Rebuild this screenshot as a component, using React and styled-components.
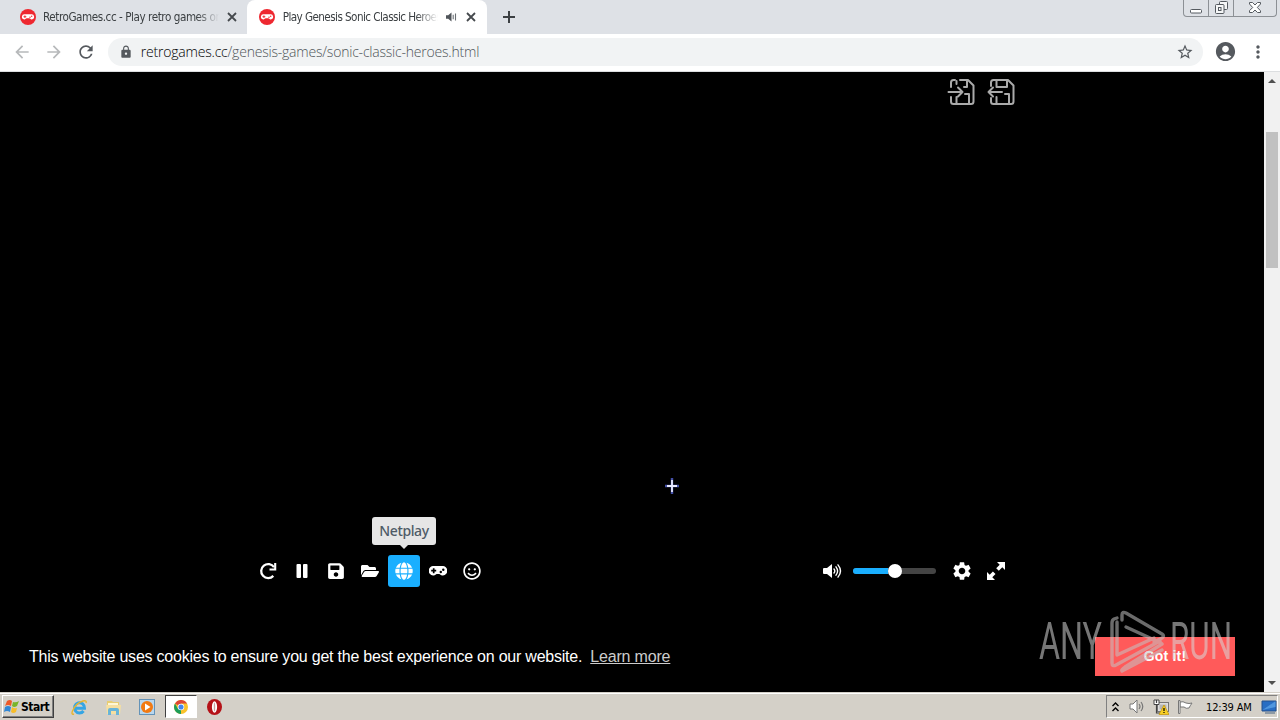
import React from 'react';
import styled, { createGlobalStyle } from 'styled-components';
import { FaSave, FaFolderOpen, FaGlobe, FaRegSmile } from 'react-icons/fa';
import { MdStarBorder, MdAccountCircle, MdMoreVert, MdLock, MdArrowBack, MdArrowForward, MdRefresh, MdSettings } from 'react-icons/md';

const App = () => {
  return (
    <>
      <GlobalStyle />
      <Screen>
        <TabStrip>
          <Tab $width={227}>
            <Favicon />
            <TabTitle $width={176} $spacing="-0.44px">RetroGames.cc - Play retro games on</TabTitle>
            <CloseIcon />
          </Tab>
          <Tab $active $width={240}>
            <Favicon />
            <TabTitle $width={155} $spacing="-0.56px">Play Genesis Sonic Classic Heroes</TabTitle>
            <SpeakerIcon />
            <CloseIcon />
          </Tab>
          <NewTab>
            <svg width="12" height="12" viewBox="0 0 12 12"><path d="M6 0v12M0 6h12" stroke="#3c4043" strokeWidth="2" /></svg>
          </NewTab>
          <WindowButtons>
            <WindowButton $width={25}>
              <svg width="12" height="5" viewBox="0 0 12 5"><rect x=".5" y=".5" width="11" height="3.5" rx="1" fill="#fff" stroke="#555a60" /></svg>
            </WindowButton>
            <WindowButton $width={25}>
              <svg width="13" height="13" viewBox="0 0 13 13" fill="#f5f6f7" stroke="#555a60">
                <rect x="4.5" y=".5" width="8" height="8" rx="1" />
                <rect x=".5" y="3.5" width="8.5" height="9" rx="1" />
                <rect x="3.5" y="6.5" width="2.5" height="3" />
              </svg>
            </WindowButton>
            <WindowButton $width={42}>
              <svg width="12" height="11" viewBox="0 0 12 11">
                <path d="M.5.5h3L6 3l2.500-2.500h3v1.500L8.300 5.500l3.200 3.200v1.800h-3L6 8l-2.500 2.500h-3V8.700l3.200-3.200L.5 2z" fill="#fff" stroke="#555a60" />
              </svg>
            </WindowButton>
          </WindowButtons>
        </TabStrip>

        <Toolbar>
          <NavButton $muted><MdArrowBack size={20} /></NavButton>
          <NavButton $muted><MdArrowForward size={20} /></NavButton>
          <NavButton><MdRefresh size={20} /></NavButton>
          <AddressBar>
            <MdLock size={14} />
            <Url><b>retrogames.cc</b>/genesis-games/sonic-classic-heroes.html</Url>
            <MdStarBorder size={18} />
          </AddressBar>
          <MdAccountCircle size={23} />
          <MdMoreVert size={20} />
        </Toolbar>

        <Content>
          <Game>
            <StateButtons>
              <LoadStateIcon />
              <SaveStateIcon />
            </StateButtons>
            <Cursor width="16" height="18" viewBox="0 0 16 18">
              <path d="M8 1v16M1 9h14" stroke="#4450a8" strokeWidth="2.400" />
              <path d="M8 3v12M3 9h10" stroke="#e9eaff" strokeWidth="1.800" />
            </Cursor>
            <Controls>
              <ControlButton><RestartIcon /></ControlButton>
              <ControlButton>
                <svg width="12" height="14" viewBox="0 0 12 14" fill="#fff"><rect x=".5" width="4.500" height="14" rx="1" /><rect x="7" width="4.500" height="14" rx="1" /></svg>
              </ControlButton>
              <ControlButton><FaSave size={18} /></ControlButton>
              <ControlButton><FaFolderOpen size={18} /></ControlButton>
              <ControlButton $active>
                <FaGlobe size={18} />
                <Tooltip>Netplay</Tooltip>
              </ControlButton>
              <ControlButton><GamepadIcon /></ControlButton>
              <ControlButton><FaRegSmile size={18} /></ControlButton>
              <Spacer />
              <ControlButton><VolumeIcon /></ControlButton>
              <Slider><SliderFill /><SliderThumb /></Slider>
              <ControlButton><MdSettings size={22} /></ControlButton>
              <ControlButton><ExpandIcon /></ControlButton>
            </Controls>
            <CookieBar>
              <CookieText>This website uses cookies to ensure you get the best experience on our website.</CookieText>
              <LearnMore>Learn more</LearnMore>
              <GotIt>Got it!</GotIt>
            </CookieBar>
            <Watermark />
          </Game>
          <Scrollbar>
            <Arrow $up />
            <Thumb />
            <Arrow />
          </Scrollbar>
        </Content>

        <Taskbar>
          <StartButton><WindowsIcon /><span>Start</span></StartButton>
          <QuickLaunch>
            <TaskItem><ExplorerIcon /></TaskItem>
            <TaskItem><FolderIcon /></TaskItem>
            <TaskItem><PlayerIcon /></TaskItem>
            <TaskItem $active><ChromeIcon /></TaskItem>
            <TaskItem><OperaIcon /></TaskItem>
          </QuickLaunch>
          <Tray>
            <svg width="7" height="10" viewBox="0 0 7 10" fill="none" stroke="#000" strokeWidth="1.400"><path d="M.5 4l3-3 3 3M.5 9l3-3 3 3" /></svg>
            <TraySpeaker />
            <TrayNetwork />
            <TrayFlag />
            <Clock>12:39 AM</Clock>
            <TrayDesktop />
          </Tray>
        </Taskbar>
      </Screen>
    </>
  );
};

export default App;

const Favicon = () => (
  <svg width="16" height="16" viewBox="0 0 16 16">
    <circle cx="8" cy="8" r="8" fill="#ee2830" />
    <path d="M4.800 5.200h6.400a2.600 2.600 0 0 1 .6 5.200c-1.200.2-1.700-1.100-2.400-1.100H6.600c-.7 0-1.200 1.300-2.400 1.100a2.600 2.600 0 0 1 .6-5.200z" fill="#fff" />
    <path d="M3.500 7.700h2.800M4.900 6.400v2.600" stroke="#ee2830" strokeWidth=".9" />
    <circle cx="10" cy="8.300" r=".7" fill="#ee2830" />
    <circle cx="11.700" cy="7.200" r=".7" fill="#ee2830" />
  </svg>
);

const CloseIcon = () => (
  <svg width="10" height="10" viewBox="0 0 10 10"><path d="M1 1l8 8M9 1L1 9" stroke="#45494d" strokeWidth="1.800" /></svg>
);

const SpeakerIcon = () => (
  <svg width="11" height="10" viewBox="0 0 11 10">
    <path d="M0 3.300h2.200L5.500.5v9L2.200 6.700H0z" fill="#50555a" />
    <path d="M7.200 2.800v4.400M9.500 1.500v7" stroke="#6b7075" strokeWidth="1.100" />
  </svg>
);

const floppy = {
  width: 28, height: 28, viewBox: '0 0 28 28', fill: 'none', stroke: '#aaa',
  strokeWidth: 2, strokeLinecap: 'round', strokeLinejoin: 'round',
};

const LoadStateIcon = () => (
  <svg {...floppy}>
    <path d="M4 9V4.500Q4 2 6.500 2H8M13 2h8l5.500 5.500v16q0 2.500-2.500 2.500H6.500Q4 26 4 23.500V19" />
    <path d="M1.500 14h14M11 9.500l4.500 4.500-4.500 4.500M9.500 3v3M20 3v6h-3M9.500 25v-6M18 16h4v9" />
  </svg>
);

const SaveStateIcon = () => (
  <svg {...floppy}>
    <path d="M4 8V4.500Q4 2 6.500 2H21l5.500 5.500v16q0 2.500-2.500 2.500H6.500Q4 26 4 23.500V20" />
    <path d="M15 14H1.500M6 9.500L1.500 14 6 18.500M9.500 2v7H20V2M9.500 25v-6M18 16h4v9" />
  </svg>
);

const RestartIcon = () => (
  <svg width="18" height="18" viewBox="0 0 18 18" fill="none" stroke="#fff" strokeWidth="2.300">
    <path d="M14.300 13.900A7 7 0 1 1 15 5.200" />
    <path d="M16.200 1v6.500H10.500" strokeWidth="2.100" />
  </svg>
);

const GamepadIcon = () => (
  <svg width="18" height="10" viewBox="0 0 18 10">
    <path d="M5 0h8a4.700 4.700 0 0 1 1 9.500C11.800 10 11.300 8 10.200 8H7.800C6.700 8 6.200 10 4 9.500A4.700 4.700 0 0 1 5 0z" fill="#fff" />
    <path d="M2.200 4.700h5M4.700 2.200v5" stroke="#000" strokeWidth="1.700" />
    <circle cx="11.800" cy="6" r="1.200" /><circle cx="14.300" cy="3.700" r="1.200" />
  </svg>
);

const VolumeIcon = () => (
  <svg width="19" height="16" viewBox="0 0 19 16">
    <path d="M1 5h3l5-4v14l-5-4H1q-1 0-1-1V6q0-1 1-1z" fill="#fff" />
    <path d="M11 6q1.600 2 0 4M13 3.800q3.200 4.200 0 8.400M15 1.900q5 6.100 0 12.200" fill="none" stroke="#fff" strokeWidth="1.400" strokeLinecap="round" />
  </svg>
);

const ExpandIcon = () => (
  <svg width="18" height="18" viewBox="0 0 18 18" fill="#fff">
    <path d="M10 0h8v8l-2.700-2.700-3.500 3.500-2.600-2.600 3.500-3.500zM0 10l2.700 2.700 3.200-3.200 2.600 2.600-3.200 3.200L8 18H0z" />
  </svg>
);

const Watermark = () => (
  <Mark width="194" height="66" viewBox="0 0 194 66">
    <text x="0" y="50" textLength="63" lengthAdjust="spacingAndGlyphs">ANY</text>
    <text x="131" y="50" textLength="62" lengthAdjust="spacingAndGlyphs">RUN</text>
    <g fill="none" stroke="#c4c4c4" strokeWidth="3.400" strokeLinejoin="round" strokeLinecap="round">
      <path d="M78 9l-3 1q-2 1-2 4v40q0 4 4 2l44-24" />
      <path d="M78 13v33l37-17" />
      <path d="M83 11V6q0-4 4-2l36 21q3 2 0 4l-8 4M87 18l35 16" />
      <path d="M123 35L86 58q-4 3-3 4l40-21" />
    </g>
  </Mark>
);

const WindowsIcon = () => (
  <svg width="16" height="15" viewBox="0 0 16 15">
    <path d="M3 2Q6 0 8 2L7 7Q4 5 1 7z" fill="#ed5928" />
    <path d="M9 3q3 1 6-1l-2 5q-3 2-5 0z" fill="#79b52b" />
    <path d="M1 8q3-2 6 0l-1 5q-3-2-6 0z" fill="#3187d5" />
    <path d="M8 8q2 2 5 1l-1 4q-3 2-5 0z" fill="#f8bd29" />
  </svg>
);

const ExplorerIcon = () => (
  <svg width="17" height="17" viewBox="0 0 17 17" fill="none">
    <path d="M4 9.200h9.500A5 5.200 0 1 0 12.500 12" stroke="#35a5e4" strokeWidth="3" />
    <path d="M3 15Q0 16 1.500 12 5 4 12 2q4-1 3 2" stroke="#e7b52f" strokeWidth="1.400" />
  </svg>
);

const FolderIcon = () => (
  <svg width="17" height="17" viewBox="0 0 17 17">
    <path d="M2 2h5l1 1h6v10H2z" fill="#e8cd72" />
    <path d="M3 4h10v4H3z" fill="#fff7d5" />
    <path d="M1 6h15l-1 9H2z" fill="#f6dfa0" />
    <path d="M3 16v-5q0-2 2-2h7q2 0 2 2v5h-3v-4H6v4z" fill="#69b4d8" />
  </svg>
);

const PlayerIcon = () => (
  <svg width="16" height="16" viewBox="0 0 16 16">
    <rect x=".5" y=".5" width="15" height="15" fill="#b9d7ee" stroke="#6493b8" />
    <circle cx="8" cy="8" r="6" fill="#f27a12" />
    <path d="M6 4.500v7L11.500 8z" fill="#fff" />
  </svg>
);

const ChromeIcon = () => (
  <svg width="14" height="14" viewBox="0 0 16 16">
    <circle cx="8" cy="8" r="8" fill="#f9c22b" />
    <path d="M8 8L1.100 4A8 8 0 0 1 15 4H8z" fill="#de4636" />
    <path d="M8 8v8A8 8 0 0 1 1.100 4L4.500 10z" fill="#1d9d59" />
    <circle cx="8" cy="8" r="3.700" fill="#fff" />
    <circle cx="8" cy="8" r="2.900" fill="#4385ee" />
  </svg>
);

const OperaIcon = () => (
  <svg width="16" height="16" viewBox="0 0 16 16">
    <ellipse cx="7.500" cy="8" rx="7.500" ry="8" fill="#b51218" />
    <ellipse cx="7.500" cy="8" rx="2.600" ry="5.800" fill="#fff" />
    <ellipse cx="7.500" cy="8" rx=".7" ry="4.600" fill="#c9a0a0" />
  </svg>
);

const TraySpeaker = () => (
  <svg width="16" height="15" viewBox="0 0 16 15" fill="none" stroke="#777">
    <path d="M1 5h3l4-4v13l-4-4H1z" fill="#fff" />
    <path d="M10 5q2 2.500 0 5M12 3q3.500 4.500 0 9" strokeWidth="1.200" />
  </svg>
);

const TrayNetwork = () => (
  <svg width="16" height="16" viewBox="0 0 16 16">
    <rect x="4.500" y="3.500" width="11" height="9" fill="#dedede" stroke="#777" />
    <rect x="6.500" y="5.500" width="7" height="5" fill="#b6b6b6" />
    <path d="M1 1h5v4.500H1z" fill="#fff" stroke="#444" />
    <path d="M3.500 1v3M3.500 5.500V14H7" fill="none" stroke="#444" strokeWidth="1.200" />
    <path d="M11 6l5 9.500H6z" fill="#f7cf24" stroke="#c19000" strokeWidth=".7" />
    <path d="M11 9v3M11 13v1" stroke="#000" strokeWidth="1.200" />
  </svg>
);

const TrayFlag = () => (
  <svg width="17" height="16" viewBox="0 0 17 16" fill="#fff" stroke="#777">
    <path d="M3 3q3-1 6 1 3 1 6 0-2 3-3 5-3 1-5-1H3z" />
    <path d="M1.500 1.500h1.500v13H1.500z" />
  </svg>
);

const TrayDesktop = () => (
  <svg width="16" height="14" viewBox="0 0 16 14">
    <path d="M1 1h14v10H1z" fill="#286dc3" stroke="#24518c" />
    <path d="M1.500 10L14 1.500h.5V7z" fill="#5097df" />
    <path d="M4 13h10" stroke="#77899a" strokeWidth="1.500" />
  </svg>
);

const GlobalStyle = createGlobalStyle`
  * { box-sizing: border-box; }
  body { margin: 0; overflow: hidden; background: #000; }
  svg { display: block; flex-shrink: 0; }
`;

const Screen = styled.div`
  width: 1280px;
  height: 720px;
  display: flex;
  flex-direction: column;
  font-family: "Liberation Sans", sans-serif;
`;

const TabStrip = styled.div`
  height: 34px;
  display: flex;
  align-items: flex-start;
  padding-left: 20px;
  background: #dee1e6;
`;

const Tab = styled.div`
  width: ${({ $width }) => $width}px;
  height: 34px;
  padding: ${({ $active }) => ($active ? '0 11px 0 12px' : '0 10px 0 0')};
  display: flex;
  align-items: center;
  justify-content: space-between;
  background: ${({ $active }) => ($active ? '#fff' : 'transparent')};
  border-radius: 8px 8px 0 0;
`;

const TabTitle = styled.div`
  width: ${({ $width }) => $width}px;
  margin-left: -1px;
  overflow: hidden;
  white-space: nowrap;
  font: 11.6px "DejaVu Sans Condensed", "DejaVu Sans", sans-serif;
  font-stretch: condensed;
  letter-spacing: ${({ $spacing }) => $spacing};
  color: #3c4043;
  mask-image: linear-gradient(to right, #000 calc(100% - 22px), transparent);
`;

const NewTab = styled.div`
  padding: 11px 16px;
`;

const WindowButtons = styled.div`
  display: flex;
  height: 17px;
  margin: 0 3px 0 auto;
  border: 1px solid #8c9095;
  border-top: 0;
  border-radius: 0 0 4px 4px;
`;

const WindowButton = styled.div`
  width: ${({ $width }) => $width}px;
  display: flex;
  align-items: ${({ $width }) => ($width === 25 ? 'flex-end' : 'center')};
  justify-content: center;
  padding-bottom: 2px;
  border-right: 1px solid #8c9095;
  &:last-child { border: 0; }
`;

const Toolbar = styled.div`
  height: 38px;
  padding: 0 12px;
  display: flex;
  align-items: center;
  background: #fff;
  border-bottom: 1px solid #dcdee0;
  color: #55595e;
  > svg { margin: -2px 0 0 11px; }
`;

const NavButton = styled.div`
  width: 32px;
  margin-top: -2px;
  color: ${({ $muted }) => ($muted ? '#b7b9bb' : '#55595e')};
`;

const AddressBar = styled.div`
  width: 1097px;
  height: 28px;
  margin-top: -1px;
  padding: 0 9px 0 11px;
  display: flex;
  align-items: center;
  border-radius: 14px;
  background: #f1f3f4;
`;

const Url = styled.div`
  flex: 1;
  margin: -2px 0 0 8px;
  font: 300 14px "Open Sans", sans-serif;
  letter-spacing: -0.21px;
  white-space: nowrap;
  color: #4f5358;
  b { font-weight: 300; color: #000; }
`;

const Content = styled.div`
  height: 620px;
  display: flex;
`;

const Game = styled.main`
  position: relative;
  width: 1264px;
  display: flex;
  flex-direction: column;
  background: #000;
`;

const StateButtons = styled.div`
  display: flex;
  gap: 12px;
  padding: 6px 0 0 947px;
`;

const Cursor = styled.svg`
  margin: 371px 0 0 664px;
`;

const Controls = styled.div`
  height: 32px;
  margin: 60px 252px 0 252px;
  display: flex;
  align-items: center;
  gap: 2px;
`;

const ControlButton = styled.div`
  position: relative;
  width: 32px;
  height: 32px;
  display: flex;
  align-items: center;
  justify-content: center;
  border-radius: 3px;
  color: #fff;
  background: ${({ $active }) => ($active ? '#1aafff' : 'transparent')};
`;

const Tooltip = styled.div`
  position: absolute;
  left: -16px;
  bottom: 42px;
  width: 64px;
  height: 28px;
  border-radius: 3px;
  background: #e6e6e6;
  color: #4f5b66;
  font: 500 14px/28px "Noto Sans", sans-serif;
  letter-spacing: -0.4px;
  text-align: center;
  &::after {
    content: '';
    position: absolute;
    top: 28px;
    left: 28px;
    border: 4px solid transparent;
    border-top-color: #e6e6e6;
  }
`;

const Spacer = styled.div`
  flex: 1;
`;

const Slider = styled.div`
  width: 83px;
  height: 6px;
  margin: 0 8px 0 3px;
  display: flex;
  align-items: center;
  border-radius: 3px;
  background: #444;
`;

const SliderFill = styled.div`
  width: 35px;
  height: 6px;
  border-radius: 3px 0 0 3px;
  background: #1aafff;
`;

const SliderThumb = styled.div`
  width: 14px;
  height: 14px;
  border-radius: 50%;
  background: #fff;
`;

const CookieBar = styled.div`
  margin-top: 50px;
  height: 39px;
  padding: 0 29px;
  display: flex;
  align-items: center;
  color: #fff;
  font-size: 16px;
  white-space: nowrap;
`;

const CookieText = styled.span`
  letter-spacing: -0.225px;
`;

const LearnMore = styled.a`
  margin-left: 8px;
  letter-spacing: -0.17px;
  color: #ccc;
  text-decoration: underline;
`;

const GotIt = styled.button`
  width: 140px;
  height: 39px;
  margin-left: auto;
  padding: 0 0 2px;
  border: 0;
  background: #ff5a5a;
  color: #fff;
  font: bold 14px "Liberation Sans", sans-serif;
  letter-spacing: 0.2px;
`;

const Mark = styled.svg`
  position: absolute;
  left: 1039px;
  top: 537px;
  opacity: .55;
  text {
    fill: #d8d8d8;
    font: 400 52px Roboto, sans-serif;
  }
`;

const Scrollbar = styled.div`
  width: 16px;
  display: flex;
  flex-direction: column;
  align-items: center;
  background: #f1f1f1;
`;

const Arrow = styled.div`
  margin: ${({ $up }) => ($up ? '7px 0 0' : 'auto 0 7px')};
  border: 4px solid transparent;
  ${({ $up }) => ($up ? 'border-top: 0; border-bottom-color: #505050;' : 'border-bottom: 0; border-top-color: #505050;')}
`;

const Thumb = styled.div`
  width: 12px;
  height: 136px;
  margin-top: 49px;
  background: #c1c1c1;
`;

const Taskbar = styled.div`
  height: 28px;
  padding: 3px 2px 1px;
  display: flex;
  background: #d4d0c8;
  box-shadow: inset 0 1px #d4d0c8, inset 0 2px #fff;
`;

const StartButton = styled.div`
  width: 52px;
  height: 23px;
  display: flex;
  align-items: center;
  gap: 1px;
  padding-left: 1px;
  border: 1px solid;
  border-color: #fff #404040 #404040 #fff;
  box-shadow: inset -1px -1px #808080;
  font: bold 12px "DejaVu Sans Condensed", "DejaVu Sans", sans-serif;
  font-stretch: condensed;
  letter-spacing: -0.5px;
`;

const QuickLaunch = styled.div`
  display: flex;
  gap: 2px;
  margin-left: 9px;
`;

const TaskItem = styled.div`
  width: 32px;
  height: 23px;
  padding-top: 1px;
  display: flex;
  align-items: center;
  justify-content: center;
  ${({ $active }) => $active && `
    background: #fff;
    border: 1px solid;
    border-color: #404040 #fff #fff #404040;
  `}
`;

const Tray = styled.div`
  width: 172px;
  height: 23px;
  margin-left: auto;
  padding: 0 0 0 5px;
  display: flex;
  align-items: center;
  gap: 8px;
  border: 1px solid;
  border-color: #808080 #fff #fff #808080;
  > svg:nth-child(2) { margin-left: 2px; }
`;

const Clock = styled.span`
  width: 47px;
  margin: 1px 0 0 4px;
  white-space: nowrap;
  font: 11px "DejaVu Sans Condensed", "DejaVu Sans", sans-serif;
  font-stretch: condensed;
  letter-spacing: -0.15px;
`;
